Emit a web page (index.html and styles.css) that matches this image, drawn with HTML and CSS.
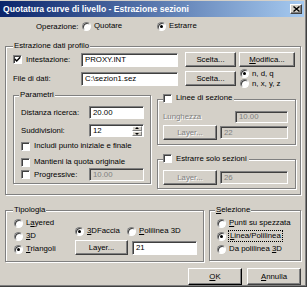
FILE: index.html
```html
<!DOCTYPE html>
<html lang="it">
<head>
  <meta charset="UTF-8">
  <title>Quotatura curve di livello - Estrazione sezioni</title>
  <link rel="stylesheet" href="styles.css">
</head>
<body>
<div class="window">
  <div class="titlebar">
    <span class="title">Quotatura curve di livello - Estrazione sezioni</span>
    <span class="close-btn">
      <svg width="7" height="6" viewBox="0 0 7 6"><path d="M0.5 0.5 L6.5 5.5 M6.5 0.5 L0.5 5.5" stroke="#000" stroke-width="1.4"/></svg>
    </span>
  </div>

  <div class="client">
    <!-- Operazione -->
    <div class="operation">
      <span class="op-label">Operazione:</span>
      <span class="radio op-quotare"><i class="dot"></i>Quotare</span>
      <span class="radio on"><i class="dot"></i>Estrarre</span>
    </div>

    <!-- Estrazione dati profilo -->
    <fieldset class="group main">
      <legend>Estrazione dati profilo</legend>
      <div class="row row-top">
        <span class="check on row-label"><i class="box"><svg width="7" height="7" viewBox="0 0 7 7"><path d="M0.8 3 L2.7 5 L6.2 1.2" fill="none" stroke="#000" stroke-width="1.4"/></svg></i>Intestazione:</span>
        <span class="field file">PROXY.INT</span>
        <span class="btn btn-scelta">Scelta...</span>
        <span class="btn btn-modifica"><span><u>M</u>odifica...</span></span>
      </div>
      <div class="row row-file">
        <span class="row-label">File di dati:</span>
        <span class="field file">C:\sezion1.sez</span>
        <span class="btn btn-scelta">Scelta...</span>
        <div class="format">
          <span class="radio on"><i class="dot"></i>n, d, q</span>
          <span class="radio"><i class="dot"></i>n, x, y, z</span>
        </div>
      </div>

      <div class="sub">
        <fieldset class="group params">
          <legend>Parametri</legend>
          <div class="prow">
            <span class="plabel">Distanza ricerca:</span>
            <span class="field small">20.00</span>
          </div>
          <div class="prow prow-spin">
            <span class="plabel">Suddivisioni:</span>
            <span class="field small spin">12
              <span class="spin-btns">
                <i class="spin-up"></i>
                <i class="spin-down"></i>
              </span>
            </span>
          </div>
          <div class="crow first"><span class="check"><i class="box"></i>Includi punto iniziale e finale</span></div>
          <div class="crow"><span class="check"><i class="box"></i>Mantieni la quota originale</span></div>
          <div class="prow prow-prog">
            <span class="check plabel"><i class="box"></i>Progressive:</span>
            <span class="field small off">10.00</span>
          </div>
        </fieldset>

        <div class="side">
          <fieldset class="group sections">
            <legend><span class="check"><i class="box"></i>Linee di sezione</span></legend>
            <div class="srow srow-len">
              <span class="dim">Lunghezza</span>
              <span class="field len off">10.00</span>
            </div>
            <div class="srow">
              <span class="btn btn-layer off">Layer...</span>
              <span class="field layer off">22</span>
            </div>
          </fieldset>
          <fieldset class="group only">
            <legend><span class="check"><i class="box"></i>Estrarre solo sezioni</span></legend>
            <div class="srow">
              <span class="btn btn-layer off">Layer...</span>
              <span class="field layer off">26</span>
            </div>
          </fieldset>
        </div>
      </div>
    </fieldset>

    <div class="lower">
      <!-- Tipologia -->
      <fieldset class="group typology">
        <legend>Tipologia</legend>
        <div class="typ-cols">
          <div class="typ-left">
            <span class="radio"><i class="dot"></i><span>L<u>a</u>yered</span></span>
            <span class="radio"><i class="dot"></i><span><u>3</u>D</span></span>
            <span class="radio on"><i class="dot"></i><span><u>T</u>riangoli</span></span>
          </div>
          <div class="typ-right">
            <div class="typ-kind">
              <span class="radio on kind-faccia"><i class="dot"></i><span><u>3</u>DFaccia</span></span>
              <span class="radio"><i class="dot"></i><span><u>P</u>olilinea 3D</span></span>
            </div>
            <div class="typ-layer">
              <span class="btn btn-tlayer">Layer...</span>
              <span class="field tlayer">21</span>
            </div>
          </div>
        </div>
      </fieldset>

      <div class="lower-right">
        <fieldset class="group selection">
          <legend><u>S</u>elezione</legend>
          <span class="radio"><i class="dot"></i><span><u>P</u>unti su spezzata</span></span>
          <span class="radio on"><i class="dot"></i><span class="focus"><u>L</u>inea/Polilinea</span></span>
          <span class="radio"><i class="dot"></i><span>Da polilinea <u>3</u>D</span></span>
        </fieldset>
      </div>
    </div>

    <div class="actions">
      <span class="btn btn-action default"><span><u>O</u>K</span></span>
      <span class="btn btn-action"><span><u>A</u>nnulla</span></span>
    </div>
  </div>
</div>
</body>
</html>
```

FILE: styles.css
```css
/* Windows classic dialog */
body {
    margin: 0;
    background: #d4d0c8;
    font-family: "Liberation Sans", Arial, sans-serif;
    font-size: 7.8px;
    color: #000;
}

.window {
    width: 307px;
    height: 287px;
    box-sizing: border-box;
    padding: 0 3px 3px 0;
    background: #d4d0c8;
    box-shadow: inset -1px -1px #404040, inset -2px -2px #808080;
    overflow: hidden;
}

/* Title bar */
.titlebar {
    display: flex;
    align-items: center;
    height: 16px;
    margin-top: 1px;
    padding: 0 2px 0 3px;
    background: linear-gradient(90deg, #0a246a, #a6caf0);
}

.title {
    flex: 1;
    color: #fff;
    font-weight: bold;
    font-size: 8.6px;
    white-space: nowrap;
}

.close-btn {
    display: flex;
    align-items: center;
    justify-content: center;
    width: 12px;
    height: 10px;
    box-sizing: border-box;
    background: #d4d0c8;
    border: 1px solid;
    border-color: #fff #404040 #404040 #fff;
    box-shadow: inset -1px -1px #808080;
}

.client {
    padding-top: 4px;
}

/* Common controls */
.btn {
    display: inline-flex;
    align-items: center;
    justify-content: center;
    box-sizing: border-box;
    height: 15px;
    background: #d4d0c8;
    border: 1px solid;
    border-color: #fff #404040 #404040 #fff;
    box-shadow: inset -1px -1px #808080;
    white-space: nowrap;
}

.btn.off,
.dim {
    color: #808080;
    text-shadow: 1px 1px 0 #fff;
}

.field {
    display: inline-flex;
    align-items: center;
    box-sizing: border-box;
    height: 14px;
    padding-left: 3px;
    background: #fff;
    border: 1px solid;
    border-color: #808080 #fff #fff #808080;
    box-shadow: inset 1px 1px #404040;
    white-space: nowrap;
}

.field.off {
    background: #d4d0c8;
    color: #808080;
}

.check,
.radio {
    display: inline-flex;
    align-items: center;
    height: 10px;
    line-height: 10px;
    white-space: nowrap;
}

.box {
    display: inline-block;
    box-sizing: border-box;
    width: 9px;
    height: 9px;
    margin-right: 4px;
    background: #fff;
    border: 1px solid;
    border-color: #808080 #fff #fff #808080;
    box-shadow: inset 1px 1px #404040;
}

.box svg {
    display: block;
}

.dot {
    position: relative;
    display: inline-block;
    box-sizing: border-box;
    width: 9px;
    height: 9px;
    margin-right: 3px;
    border-radius: 50%;
    background: #fff;
    border: 1px solid;
    border-color: #808080 #fff #fff #808080;
    box-shadow: inset 1px 1px #404040;
}

.radio.on .dot::after {
    content: "";
    position: absolute;
    left: 2px;
    top: 2px;
    width: 3px;
    height: 3px;
    border-radius: 50%;
    background: #000;
}

u {
    text-decoration: underline;
    text-underline-offset: 1px;
}

/* Group boxes */
.group {
    margin: 0;
    min-width: 0;
    box-sizing: border-box;
    border: 1px solid #808080;
    box-shadow: inset 1px 1px #fff, 1px 1px 0 #fff;
}

.group legend {
    padding: 0 1px;
    line-height: 10px;
    background: #d4d0c8;
}

/* Operazione */
.operation {
    display: flex;
    align-items: center;
    height: 10px;
    padding-left: 36px;
}

.op-label {
    width: 46px;
}

.op-quotare {
    width: 75px;
}

/* Estrazione dati profilo */
.main {
    width: 296px;
    margin: 10px 0 0 5px;
    padding: 1px 4px 5px 7px;
}

.row {
    display: flex;
    align-items: center;
    height: 15px;
}

.row-file {
    margin-top: 4px;
}

.row-label {
    width: 68px;
}

.field.file {
    width: 97px;
}

.btn-scelta {
    width: 51px;
    margin-left: 7px;
}

.btn-modifica {
    width: 56px;
    margin-left: 3px;
}

.format {
    display: flex;
    flex-direction: column;
    margin-left: 4px;
}

.sub {
    display: flex;
    align-items: flex-start;
    gap: 6px;
    margin-top: 4px;
}

/* Parametri */
.params {
    width: 138px;
    padding: 6px 5px 2px 7px;
}

.params legend {
    margin-left: -2px;
}

.prow {
    display: flex;
    align-items: center;
    height: 13px;
}

.prow-spin {
    margin-top: 5px;
}

.prow-prog {
    margin-top: 1px;
}

.plabel {
    width: 68px;
}

.field.small {
    width: 55px;
    height: 13px;
}

.field.spin {
    justify-content: space-between;
    padding-right: 1px;
}

.spin-btns {
    display: flex;
    flex-direction: column;
}

.spin-btns i {
    position: relative;
    display: block;
    box-sizing: border-box;
    width: 10px;
    height: 5px;
    background: #d4d0c8;
    border: 1px solid;
    border-color: #fff #808080 #808080 #fff;
}

.spin-up::after,
.spin-down::after {
    content: "";
    position: absolute;
    left: 2px;
    border-left: 2px solid transparent;
    border-right: 2px solid transparent;
}

.spin-up::after {
    top: 0;
    border-bottom: 2px solid #000;
}

.spin-down::after {
    top: 1px;
    border-top: 2px solid #000;
}

.crow {
    height: 10px;
    margin-top: 6px;
}

.crow.first {
    margin-top: 4px;
}

/* Linee di sezione / Estrarre solo sezioni */
.side {
    display: flex;
    flex-direction: column;
    margin-top: 3px;
    width: 139px;
}

.sections {
    padding: 5px 7px 4px 5px;
}

.only {
    margin-top: 9px;
    padding: 4px 7px 3px 5px;
}

.sections legend,
.only legend {
    padding: 0 2px 0 0;
}

.srow {
    display: flex;
    align-items: center;
    justify-content: space-between;
    height: 15px;
}

.srow-len {
    height: 12px;
    margin-bottom: 2px;
}

.field.len {
    width: 53px;
    height: 12px;
}

.btn-layer {
    width: 54px;
}

.field.layer {
    width: 68px;
    height: 13px;
}

/* Tipologia / Selezione */
.lower {
    display: flex;
    gap: 5px;
    margin: 10px 0 0 5px;
}

.typology {
    width: 199px;
    padding: 3px 5px 6px 8px;
}

.typology legend {
    margin-left: -1px;
}

.typ-cols {
    display: flex;
}

.typ-left,
.selection {
    display: flex;
    flex-direction: column;
    gap: 3px;
}

.typ-left {
    width: 61px;
}

.typ-right {
    padding-top: 8px;
}

.typ-kind {
    display: flex;
    height: 10px;
}

.kind-faccia {
    width: 52px;
}

.typ-layer {
    display: flex;
    align-items: center;
    gap: 4px;
    margin-top: 4px;
}

.btn-tlayer {
    width: 53px;
}

.field.tlayer {
    width: 65px;
    height: 14px;
}

.selection {
    width: 92px;
    padding: 3px 4px 6px 7px;
}

.selection legend {
    margin-left: -2px;
}

.focus {
    outline: 1px dotted #000;
    outline-offset: 0;
    padding: 0 1px;
}

/* Dialog buttons */
.actions {
    display: flex;
    justify-content: flex-end;
    gap: 5px;
    margin-top: 6px;
    padding-right: 3px;
}

.btn-action {
    width: 54px;
    height: 17px;
}

.btn-action.default {
    border-color: #fff #000 #000 #fff;
}
```
